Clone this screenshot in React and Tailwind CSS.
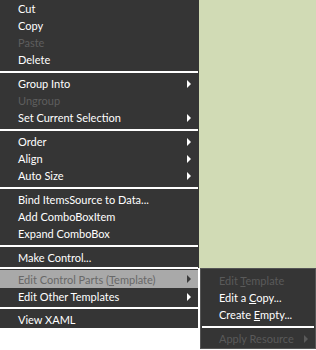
import React from "react";

const Arrow = ({ color = "#ffffff" }) => (
  <svg width="5" height="8" viewBox="0 0 5 8" className="shrink-0">
    <path d="M0 0 L4 4 L0 8 Z" fill={color} />
  </svg>
);

const Item = ({ label, disabled, sub, highlight, h = "h-[17px]" }) => (
  <div
    className={`${h} flex items-center pl-[18px] pr-[6px] ${
      highlight ? "bg-[#a9a9a9] text-[#686868]" : disabled ? "text-[#5e5e5e]" : "text-white"
    }`}
  >
    <span className="flex-1 whitespace-nowrap">{label}</span>
    {sub && <Arrow color={highlight ? "#3a3a3a" : "#ffffff"} />}
  </div>
);

const Sep = ({ t = "pt-[3px]", b = "pb-[2px]" }) => (
  <div className={`${t} ${b}`}>
    <div className="h-[2px] bg-white" />
  </div>
);

export default function App() {
  return (
    <div
      className="w-[316px] h-[350px] bg-white flex overflow-hidden text-[11px] leading-none"
      style={{ fontFamily: 'Lato, "Noto Sans", sans-serif' }}
    >
      <div className="w-[198px] shrink-0 flex flex-col">
        <div className="bg-[#353535] flex flex-col">
          <Item label="Cut" />
          <Item label="Copy" />
          <Item label="Paste" disabled />
          <Item label="Delete" />
          <Sep />
          <Item label="Group Into" sub />
          <Item label="Ungroup" disabled />
          <Item label="Set Current Selection" sub />
          <Sep />
          <Item label="Order" sub />
          <Item label="Align" sub />
          <Item label="Auto Size" sub />
          <Sep />
          <Item label="Bind ItemsSource to Data..." />
          <Item label="Add ComboBoxItem" />
          <Item label="Expand ComboBox" />
          <Sep />
          <Item label="Make Control..." h="h-[16px]" />
          <Sep t="pt-[2px]" b="pb-[1px]" />
          <Item
            label={
              <>
                Edit Control Parts (<span className="underline">T</span>emplate)
              </>
            }
            sub
            highlight
            h="h-[18px]"
          />
          <Item label="Edit Other Templates" sub />
          <Sep t="pt-[2px]" />
          <Item label="View XAML" />
        </div>
      </div>
      <div className="w-[1px] shrink-0 flex flex-col">
        <div className="h-[268px] bg-[#353535]" />
        <div className="h-[61px] bg-white" />
      </div>
      <div className="flex-1 flex flex-col">
        <div className="h-[268px] bg-[#d1dbb5] shrink-0" />
        <div className="ml-[1px] border border-[#555555] bg-[#353535] h-[81px] flex flex-col pt-[3px]">
          <div className="h-[17px] flex items-center pl-[18px] text-[#5a5a5a] whitespace-nowrap">
            <span>
              Edit <span className="underline">T</span>emplate
            </span>
          </div>
          <div className="h-[17px] flex items-center pl-[18px] text-white whitespace-nowrap">
            <span>
              Edit a <span className="underline">C</span>opy...
            </span>
          </div>
          <div className="h-[17px] flex items-center pl-[18px] text-white whitespace-nowrap">
            <span>
              Create <span className="underline">E</span>mpty...
            </span>
          </div>
          <div className="pt-[3px] pb-[2px] px-[1px]">
            <div className="h-[2px] bg-white" />
          </div>
          <div className="h-[17px] flex items-center pl-[18px] pr-[6px] text-[#5a5a5a] whitespace-nowrap">
            <span className="flex-1">Apply Resource</span>
            <Arrow color="#5a5a5a" />
          </div>
        </div>
      </div>
    </div>
  );
}
